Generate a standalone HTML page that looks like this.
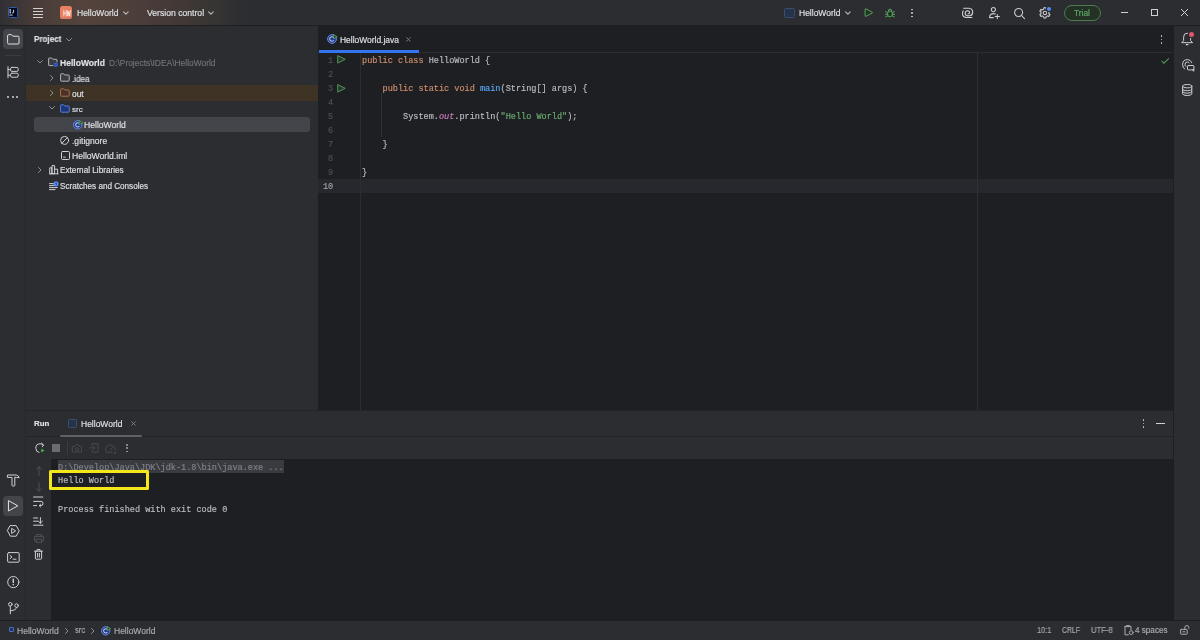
<!DOCTYPE html>
<html><head><meta charset="utf-8">
<style>
*{margin:0;padding:0;box-sizing:border-box}
html,body{width:1200px;height:640px;overflow:hidden;background:#2B2D30;font-family:"Liberation Sans",sans-serif;color:#DFE1E5}
.a{position:absolute}
.t{position:absolute;white-space:pre;will-change:transform;-webkit-text-stroke:0.15px currentColor;line-height:12px;height:12px;font-size:8.2px}
.m{font-family:"Liberation Mono",monospace}
svg{position:absolute;overflow:visible}
.ic{fill:none;stroke:#CED0D6;stroke-width:1;stroke-linecap:round;stroke-linejoin:round}
</style></head><body>
<!-- TITLE BAR -->
<div class="a" id="title" style="left:0;top:0;width:1200px;height:25px;background:#2B2D30"></div>
<div class="a" style="left:0;top:0;width:520px;height:25px;background:linear-gradient(90deg,#2F2F33 0px,#3A3536 14px,#4A3D39 38px,#53433C 80px,#50413B 110px,#4B3D3A 140px,#3F3835 188px,#373434 215px,#2E2E31 238px,#2B2D30 260px)"></div>

<!-- IDE logo -->
<div class="a" style="left:7.5px;top:7px;width:10.5px;height:10.5px;background:#060A20;border:1px solid #2C5C9E;border-radius:1.5px"></div>
<svg style="left:9px;top:8.5px" width="7" height="8"><g fill="none" stroke="#E6E6EE" stroke-width="0.9"><path d="M1.2 0.8 L1.2 3.8 M0.4 0.8 L2 0.8 M0.4 3.8 L2 3.8 M4.6 0.8 L4.6 3 Q4.6 3.9 3.7 3.9 L3 3.9"/></g><rect x="0.4" y="5.6" width="3.2" height="0.9" fill="#E6E6EE"/></svg>
<!-- hamburger -->
<div class="a" style="left:32.5px;top:8px;width:10.5px;height:1px;background:#D6CFCB"></div>
<div class="a" style="left:32.5px;top:11px;width:10.5px;height:1px;background:#D6CFCB"></div>
<div class="a" style="left:32.5px;top:14px;width:10.5px;height:1px;background:#D6CFCB"></div>
<div class="a" style="left:32.5px;top:17px;width:10.5px;height:1px;background:#D6CFCB"></div>
<!-- HW badge -->
<div class="a" style="left:59.9px;top:6.3px;width:12.5px;height:12.7px;background:linear-gradient(135deg,#EC8568,#DD7558);border-radius:2.6px"></div>
<svg style="left:62.5px;top:9.5px" width="8" height="7"><g fill="none" stroke="#FFF0E8" stroke-width="0.85"><path d="M0.8 0.2 L0.8 6.3 M3.2 0.2 L3.2 6.3 M0.8 3.1 L3.2 3.1"/><path d="M4.1 0.2 L4.9 6.2 L5.8 1.2 L6.7 6.2 L7.5 0.2"/></g></svg>
<div class="t" id="tb1" style="left:76.5px;top:7px;font-size:8.5px;color:#DFE1E5">HelloWorld</div>
<svg style="left:123px;top:10.6px" width="6" height="4"><path class="ic" d="M0.6 0.8 L2.9 3.1 L5.2 0.8" style="stroke:#BDB7B4;stroke-width:1.15"/></svg>
<div class="t" id="tb2" style="left:147px;top:7px;font-size:8.63px;color:#DFE1E5">Version control</div>
<svg style="left:207.7px;top:10.6px" width="6" height="4"><path class="ic" d="M0.6 0.8 L2.9 3.1 L5.2 0.8" style="stroke:#B8B6B6;stroke-width:1.15"/></svg>

<!-- run config -->
<div class="a" style="left:784px;top:8px;width:11px;height:10px;background:#263248;border:1px solid #3A4E72;border-radius:1.5px"></div>
<div class="t" id="tb3" style="left:798.75px;top:7px;font-size:8.5px;color:#DFE1E5">HelloWorld</div>
<svg style="left:844.5px;top:10.6px" width="6" height="4"><path class="ic" d="M0.6 0.8 L2.9 3.1 L5.2 0.8" style="stroke:#B6B8BE;stroke-width:1.15"/></svg>
<svg style="left:864px;top:8px" width="10" height="10"><path d="M1.1 1.3 Q1.1 0.5 1.9 0.9 L8.3 4.2 Q8.9 4.6 8.3 5 L1.9 8.3 Q1.1 8.7 1.1 7.9 Z" fill="#1F3324" stroke="#58A45E" stroke-width="1" stroke-linejoin="round"/></svg>
<svg style="left:885px;top:8px" width="10" height="10"><g fill="none" stroke="#58A45E" stroke-width="1" stroke-linecap="round"><ellipse cx="5" cy="5.9" rx="2.5" ry="3" fill="#1F3324"/><path d="M3.3 3.2 Q3.3 1 5 1 Q6.7 1 6.7 3.2"/><path d="M0.6 3.6 L2.4 4.6 M0.4 6.3 L2.4 6.3 M0.7 8.9 L2.6 7.9 M9.4 3.6 L7.6 4.6 M9.6 6.3 L7.6 6.3 M9.3 8.9 L7.4 7.9"/></g></svg>
<div class="a" style="left:911px;top:8.5px;width:1.6px;height:1.6px;background:#CED0D6;border-radius:1px"></div>
<div class="a" style="left:911px;top:12px;width:1.6px;height:1.6px;background:#CED0D6;border-radius:1px"></div>
<div class="a" style="left:911px;top:15.5px;width:1.6px;height:1.6px;background:#CED0D6;border-radius:1px"></div>
<!-- AI swirl -->
<svg style="left:961px;top:7px" width="13" height="12"><path class="ic" d="M2.6 1.2 L7.8 1.2 Q11.7 1.4 11.7 5.4 Q11.5 8.5 8.9 8.8 L6.7 8.9 Q4.2 8.7 4.2 6.3 Q4.4 3.9 6.6 3.8 Q8.7 3.9 8.7 5.9 Q8.5 6.9 7.1 6.9 M10.9 10.5 L5 10.4 Q1.5 10.2 1.5 6.6 Q1.5 5 2.2 3.9" style="stroke:#CED0D6;stroke-width:1.1"/></svg>
<!-- add user -->
<svg style="left:989px;top:7px" width="12" height="12"><g class="ic" style="stroke-width:1.05"><circle cx="4.4" cy="2.6" r="2.1"/><path d="M0.6 10.6 Q0.6 6.6 4.6 6.6 Q5.6 6.6 6.4 6.9 M0.6 10.6 L4.3 10.6"/><path d="M8.3 7.4 L8.3 11.6 M6.2 9.5 L10.4 9.5"/></g></svg>
<!-- search -->
<svg style="left:1014px;top:7.5px" width="12" height="12"><g class="ic" style="stroke-width:1.05"><circle cx="4.6" cy="4.5" r="4"/><path d="M7.5 7.5 L10.5 10.6"/></g></svg>
<!-- settings -->
<svg style="left:1039px;top:7px" width="12" height="12"><g class="ic" style="stroke-width:1.05"><path d="M3.90 2.44 L4.73 2.07 L4.80 0.72 L7.00 0.72 L7.07 2.07 L7.90 2.44 L8.63 2.97 L9.84 2.35 L10.94 4.26 L9.80 5.00 L9.90 5.90 L9.80 6.80 L10.94 7.54 L9.84 9.45 L8.63 8.83 L7.90 9.36 L7.07 9.73 L7.00 11.08 L4.80 11.08 L4.73 9.73 L3.90 9.36 L3.17 8.83 L1.96 9.45 L0.86 7.54 L2.00 6.80 L1.90 5.90 L2.00 5.00 L0.86 4.26 L1.96 2.35 L3.17 2.97 Z"/><circle cx="5.9" cy="5.9" r="1.7"/></g></svg>
<div class="a" style="left:1046.6px;top:6.5px;width:4.4px;height:4.4px;background:#548AF7;border-radius:50%;box-shadow:0 0 0 1.1px #2B2D30"></div>
<!-- Trial -->
<div class="a" style="left:1064px;top:4.5px;width:37px;height:16px;background:#233224;border:1.1px solid #4C7D50;border-radius:8px"></div>
<div class="t" id="trial" style="left:1074.4px;top:7.2px;font-size:8.4px;color:#62A866">Trial</div>
<!-- window controls -->
<div class="a" style="left:1121px;top:12px;width:7px;height:1px;background:#CED0D6"></div>
<div class="a" style="left:1151px;top:9px;width:7px;height:7px;border:1px solid #CED0D6"></div>
<svg style="left:1181px;top:9px" width="7" height="7"><path d="M0 0 L7 7 M7 0 L0 7" stroke="#CED0D6" stroke-width="1"/></svg>
<div class="a" style="left:0;top:25px;width:1200px;height:1px;background:#1E1F22"></div>

<!-- LEFT STRIP -->
<div class="a" style="left:25px;top:26px;width:1.4px;height:594px;background:#27282B"></div>


<!-- left strip icons -->
<div class="a" style="left:3px;top:29px;width:19.5px;height:19.5px;background:#43454A;border-radius:4px"></div>
<svg style="left:6.5px;top:33.5px" width="13" height="11"><path class="ic" d="M0.6 1.6 Q0.6 0.6 1.6 0.6 L4.4 0.6 L5.8 2.2 L11 2.2 Q12 2.2 12 3.2 L12 9 Q12 10 11 10 L1.6 10 Q0.6 10 0.6 9 Z" style="stroke:#DFE1E5"/></svg>
<div class="a" style="left:5px;top:55px;width:15.5px;height:1px;background:#393B40"></div>
<svg style="left:6.5px;top:65.5px" width="12" height="13"><g class="ic"><path d="M1 0.6 L1 11.8 M1 3.6 L3.2 3.6 M1 9.2 L3.2 9.2"/><rect x="3.6" y="1.4" width="7.6" height="4" rx="1.3"/><rect x="3.6" y="7.2" width="7.6" height="4" rx="1.3"/></g></svg>
<div class="a" style="left:7.1px;top:96.3px;width:2.1px;height:2.1px;background:#CED0D6;border-radius:50%"></div>
<div class="a" style="left:11.6px;top:96.3px;width:2.1px;height:2.1px;background:#CED0D6;border-radius:50%"></div>
<div class="a" style="left:16.1px;top:96.3px;width:2.1px;height:2.1px;background:#CED0D6;border-radius:50%"></div>
<!-- bottom left strip -->
<svg style="left:6.5px;top:473.5px" width="13" height="13"><g class="ic"><path d="M0.8 1 L9.2 1 Q11.6 1.6 12.2 3.6 L9.6 3.6 L7.8 3 L7.8 11.4 Q7.8 12 7.2 12 L5.6 12 Q5 12 5 11.4 L5 3.4 L0.8 3.4 Z"/></g></svg>
<div class="a" style="left:3px;top:496px;width:19.5px;height:19.5px;background:#43454A;border-radius:4px"></div>
<svg style="left:8px;top:499.5px" width="11" height="12"><path class="ic" d="M0.8 0.8 L9.8 5.8 L0.8 10.8 Z" style="stroke:#DFE1E5"/></svg>
<svg style="left:6.5px;top:525px" width="13" height="12"><g class="ic"><path d="M3.4 0.6 L9.2 0.6 L12.2 5.9 L9.2 11.2 L3.4 11.2 L0.5 5.9 Z"/><path d="M5 3.6 L8.6 5.9 L5 8.2 Z"/></g></svg>
<svg style="left:6.5px;top:551.5px" width="13" height="11"><g class="ic"><rect x="0.6" y="0.6" width="11.6" height="9.6" rx="1.2"/><path d="M3 3.4 L5 5 L3 6.6 M6 7.2 L9 7.2"/></g></svg>
<svg style="left:6.5px;top:576px" width="13" height="13"><g class="ic"><circle cx="6.3" cy="6.1" r="5.6"/><path d="M6.3 3.2 L6.3 6.4" stroke-width="1.4"/></g><circle cx="6.3" cy="8.6" r="0.8" fill="#CED0D6"/></svg>
<svg style="left:7.5px;top:601.5px" width="12" height="13"><g class="ic"><circle cx="2.3" cy="2.3" r="1.8"/><circle cx="8.6" cy="3.6" r="1.8"/><path d="M2.3 4.1 L2.3 11.8 M8.6 5.4 Q8.6 8.3 2.3 8.8"/></g></svg>
<!-- right strip icons -->
<svg style="left:1181px;top:32px" width="13" height="14"><g class="ic"><path d="M1 10.4 L2.6 8.6 L2.6 5.2 Q2.6 1.2 6.1 1.2 Q9.6 1.2 9.6 5.2 L9.6 8.6 L11.3 10.4 Z"/><path d="M5.2 12.6 L7 12.6" stroke-width="1.2"/></g></svg>
<div class="a" style="left:1188.9px;top:32.3px;width:5.2px;height:5.2px;background:#E0566A;border-radius:50%;box-shadow:0 0 0 1.2px #2B2D30"></div>
<svg style="left:1181.5px;top:59px" width="13" height="13"><g class="ic"><path d="M9.8 3.6 Q8.4 0.6 5.6 0.6 Q0.6 0.6 0.6 5.6 Q0.6 8.4 2.6 10"/><path d="M7.2 4 Q6.6 3 5.4 3 Q3 3 3 5.6 Q3 6.8 4 7.6"/><rect x="5.5" y="6.5" width="6.4" height="4.4" rx="0.8"/><path d="M10.4 10.9 L11.8 12.2 L11.8 10.6"/></g></svg>
<svg style="left:1181.5px;top:84px" width="11" height="12"><g class="ic"><ellipse cx="5.2" cy="2.2" rx="4.6" ry="1.7"/><path d="M0.6 2.2 L0.6 9.8 Q0.6 11.5 5.2 11.5 Q9.8 11.5 9.8 9.8 L9.8 2.2 M0.6 5 Q0.6 6.7 5.2 6.7 Q9.8 6.7 9.8 5 M0.6 7.6 Q0.6 9.2 5.2 9.2 Q9.8 9.2 9.8 7.6"/></g></svg>
<!-- PROJECT PANEL -->
<div class="a" style="left:26px;top:26px;width:292px;height:384px;background:#2B2D30"></div>


<div class="t" style="left:34.25px;top:33.3px;font-size:8.6px;font-weight:bold;color:#DFE1E5;transform:scaleX(0.94);transform-origin:0 0">Project</div>
<svg style="left:66px;top:38px" width="6" height="4"><path class="ic" d="M0.5 0.5 L3 3 L5.5 0.5" style="stroke:#8C8F96"/></svg>
<!-- out row highlight -->
<div class="a" style="left:26px;top:85.3px;width:292px;height:15.5px;background:#3E3325"></div>
<!-- selected row -->
<div class="a" style="left:34px;top:116.95px;width:276px;height:15px;background:#43454A;border-radius:3px"></div>
<!-- chevrons -->
<svg style="left:36.5px;top:59.75px" width="6" height="4"><path class="ic" d="M0.5 0.5 L3 3 L5.5 0.5" style="stroke:#8C8F96"/></svg>
<svg style="left:49.5px;top:74.7px" width="4" height="6"><path class="ic" d="M0.5 0.5 L3 3 L0.5 5.5" style="stroke:#8C8F96"/></svg>
<svg style="left:49.5px;top:90.15px" width="4" height="6"><path class="ic" d="M0.5 0.5 L3 3 L0.5 5.5" style="stroke:#8C8F96"/></svg>
<svg style="left:48.5px;top:106.1px" width="6" height="4"><path class="ic" d="M0.5 0.5 L3 3 L5.5 0.5" style="stroke:#8C8F96"/></svg>
<svg style="left:37.5px;top:167.4px" width="4" height="6"><path class="ic" d="M0.5 0.5 L3 3 L0.5 5.5" style="stroke:#8C8F96"/></svg>
<!-- icons -->
<svg style="left:48px;top:57.25px" width="10" height="10"><path d="M0.6 1.6 Q0.6 1 1.2 1 L3.6 1 L4.8 2.3 L8.4 2.3 Q9 2.3 9 2.9 L9 8 Q9 8.6 8.4 8.6 L1.2 8.6 Q0.6 8.6 0.6 8 Z" fill="#3A3C41" stroke="#B4B6BC" stroke-width="1" stroke-linejoin="round"/><rect x="5.6" y="5.6" width="4.2" height="4.2" rx="0.8" fill="#2A4AA8" stroke="#2B2D30" stroke-width="0.9"/><rect x="6.1" y="6.1" width="3.2" height="3.2" rx="0.6" fill="#2A4AA8" stroke="#4C7BE0" stroke-width="0.7"/></svg>
<svg style="left:60px;top:72.7px" width="10" height="9"><path d="M0.6 1.4 Q0.6 0.8 1.2 0.8 L3.6 0.8 L4.8 2 L8.6 2 Q9.2 2 9.2 2.6 L9.2 7.6 Q9.2 8.2 8.6 8.2 L1.2 8.2 Q0.6 8.2 0.6 7.6 Z" fill="#3A3C41" stroke="#B4B6BC" stroke-width="1" stroke-linejoin="round"/></svg>
<svg style="left:60px;top:88.15px" width="10" height="9"><path d="M0.6 1.4 Q0.6 0.8 1.2 0.8 L3.6 0.8 L4.8 2 L8.6 2 Q9.2 2 9.2 2.6 L9.2 7.6 Q9.2 8.2 8.6 8.2 L1.2 8.2 Q0.6 8.2 0.6 7.6 Z" fill="#4A3129" stroke="#A8714E" stroke-width="1" stroke-linejoin="round"/></svg>
<svg style="left:60px;top:103.6px" width="10" height="9"><path d="M0.6 1.4 Q0.6 0.8 1.2 0.8 L3.6 0.8 L4.8 2 L8.6 2 Q9.2 2 9.2 2.6 L9.2 7.6 Q9.2 8.2 8.6 8.2 L1.2 8.2 Q0.6 8.2 0.6 7.6 Z" fill="#1F3478" stroke="#5A7ED6" stroke-width="1" stroke-linejoin="round"/></svg>
<svg style="left:72.5px;top:119.55px" width="10" height="10"><circle cx="4.7" cy="4.8" r="4.2" fill="#22398A" stroke="#6D8DDB" stroke-width="0.95"/><path d="M6.4 3.5 A2.1 2.1 0 1 0 6.4 6.1" fill="none" stroke="#B5C6F2" stroke-width="1.05"/><path d="M6.2 0.6 L9.6 2.6 L6.2 4.6 Z" fill="#1E3D27" stroke="#5EAE66" stroke-width="0.8" stroke-linejoin="round"/></svg>
<svg style="left:60px;top:135.5px" width="10" height="10"><g class="ic" style="stroke:#CED0D6"><circle cx="4.6" cy="4.4" r="4"/><path d="M1.8 7.2 L7.4 1.6"/></g></svg>
<svg style="left:60.5px;top:150.95px" width="9" height="9"><g class="ic" style="stroke:#CED0D6"><rect x="0.5" y="0.5" width="8" height="8" rx="1"/><path d="M2.6 6.2 L4.2 6.2"/></g></svg>
<svg style="left:48.5px;top:165.4px" width="10" height="10"><g class="ic" style="stroke:#CED0D6"><path d="M0.5 8.8 L9 8.8 M0.7 3.2 L0.7 8.8 L2.8 8.8 L2.8 3.2 Z M3 1 L3 8.8 L5.6 8.8 L5.6 1 Z M5.6 4.2 L8.6 4.2 L8.6 8.8"/></g></svg>
<svg style="left:48.5px;top:180.85px" width="10" height="10"><g class="ic" style="stroke:#CED0D6"><path d="M0.5 2.6 L4.6 2.6 M0.5 4.6 L5 4.6 M0.5 6.6 L8.4 6.6 M0.5 8.6 L6 8.6"/></g><circle cx="7" cy="2.8" r="2.6" fill="#548AF7"/><path d="M7 1.6 L7 2.9 L8 3.5" stroke="#1E1F22" stroke-width="0.7" fill="none"/></svg>
<!-- texts -->
<div class="t" style="left:60px;top:57.25px;font-size:8.55px;font-weight:bold;color:#DFE1E5">HelloWorld</div>
<div class="t" style="left:109.2px;top:57.25px;font-size:8.43px;color:#6F737A">D:\Projects\IDEA\HelloWorld</div>
<div class="t" style="left:71.7px;top:72.5px;font-size:8.5px;transform:scaleX(0.95);transform-origin:0 0">.idea</div>
<div class="t" style="left:71.7px;top:88.15px;font-size:8.4px">out</div>
<div class="t" style="left:71.9px;top:103.6px;font-size:8.1px">src</div>
<div class="t" style="left:84.2px;top:119.05px;font-size:8.6px">HelloWorld</div>
<div class="t" style="left:71.9px;top:134.5px;font-size:8.55px">.gitignore</div>
<div class="t" style="left:71.9px;top:149.95px;font-size:8.6px">HelloWorld.iml</div>
<div class="t" style="left:59.7px;top:165.4px;font-size:8.2px">External Libraries</div>
<div class="t" style="left:59.7px;top:180.85px;font-size:8.15px">Scratches and Consoles</div>

<!-- EDITOR -->
<div class="a" style="left:318px;top:26px;width:856px;height:384px;background:#1E1F22"></div>
<div class="a" style="left:318px;top:52px;width:856px;height:1px;background:#2B2D30"></div>


<!-- tab -->
<svg style="left:326.75px;top:33.9px" width="11" height="11"><circle cx="5" cy="5" r="4.4" fill="#22398A" stroke="#6D8DDB" stroke-width="0.95"/><path d="M6.8 3.6 A2.3 2.3 0 1 0 6.8 6.4" fill="none" stroke="#B5C6F2" stroke-width="1.05"/><path d="M6.6 0.6 L10.2 2.7 L6.6 4.8 Z" fill="#1E3D27" stroke="#5EAE66" stroke-width="0.8" stroke-linejoin="round"/></svg>
<div class="t" style="left:340px;top:34px;font-size:8.45px;color:#DFE1E5">HelloWorld.java</div>
<svg style="left:406.3px;top:37.2px" width="5" height="5"><path d="M0.3 0.3 L4.6 4.6 M4.6 0.3 L0.3 4.6" stroke="#7D8087" stroke-width="0.9"/></svg>
<div class="a" style="left:319px;top:49.7px;width:100px;height:3px;background:#3574F0"></div>
<!-- tab row kebab -->
<div class="a" style="left:1160.5px;top:35px;width:1.5px;height:1.5px;background:#CED0D6;border-radius:1px"></div>
<div class="a" style="left:1160.5px;top:38.5px;width:1.5px;height:1.5px;background:#CED0D6;border-radius:1px"></div>
<div class="a" style="left:1160.5px;top:42px;width:1.5px;height:1.5px;background:#CED0D6;border-radius:1px"></div>
<!-- check -->
<svg style="left:1161px;top:58px" width="9" height="6"><path d="M0.7 3 L2.9 5.2 L7.6 0.6" fill="none" stroke="#4F9A57" stroke-width="1.05" stroke-linecap="round"/></svg>
<!-- current line -->
<div class="a" style="left:318px;top:179.2px;width:855px;height:14.3px;background:#26282E"></div>
<!-- gutter line, right margin, indent guide -->
<div class="a" style="left:360px;top:53px;width:1px;height:357px;background:#2B2D30"></div>
<div class="a" style="left:977px;top:53px;width:1px;height:357px;background:#2E3034"></div>
<div class="a" style="left:381px;top:92.7px;width:1px;height:44.5px;background:#2F3136"></div>
<div class="t m" style="left:300px;width:33.2px;text-align:right;top:53.6px;height:14px;line-height:14px;font-size:8.55px;color:#4B5059">1</div>
<div class="t m" style="left:300px;width:33.2px;text-align:right;top:67.65px;height:14px;line-height:14px;font-size:8.55px;color:#4B5059">2</div>
<div class="t m" style="left:300px;width:33.2px;text-align:right;top:81.7px;height:14px;line-height:14px;font-size:8.55px;color:#4B5059">3</div>
<div class="t m" style="left:300px;width:33.2px;text-align:right;top:95.75px;height:14px;line-height:14px;font-size:8.55px;color:#4B5059">4</div>
<div class="t m" style="left:300px;width:33.2px;text-align:right;top:109.8px;height:14px;line-height:14px;font-size:8.55px;color:#4B5059">5</div>
<div class="t m" style="left:300px;width:33.2px;text-align:right;top:123.85px;height:14px;line-height:14px;font-size:8.55px;color:#4B5059">6</div>
<div class="t m" style="left:300px;width:33.2px;text-align:right;top:137.9px;height:14px;line-height:14px;font-size:8.55px;color:#4B5059">7</div>
<div class="t m" style="left:300px;width:33.2px;text-align:right;top:151.95px;height:14px;line-height:14px;font-size:8.55px;color:#4B5059">8</div>
<div class="t m" style="left:300px;width:33.2px;text-align:right;top:166.0px;height:14px;line-height:14px;font-size:8.55px;color:#4B5059">9</div>
<div class="t m" style="left:300px;width:33.2px;text-align:right;top:180.05px;height:14px;line-height:14px;font-size:8.55px;color:#A1A3AB">10</div>
<div class="t m" style="left:362px;top:53.6px;height:14px;line-height:14px;font-size:8.55px;color:#BCBEC4"><span style="color:#CF8E6D">public class </span>HelloWorld {</div>
<div class="t m" style="left:362px;top:81.7px;height:14px;line-height:14px;font-size:8.55px;color:#BCBEC4">    <span style="color:#CF8E6D">public static void </span><span style="color:#56A8F5">main</span>(String[] args) {</div>
<div class="t m" style="left:362px;top:109.8px;height:14px;line-height:14px;font-size:8.55px;color:#BCBEC4">        System.<span style="color:#C77DBB;font-style:italic">out</span>.println(<span style="color:#6AAB73">"Hello World"</span>);</div>
<div class="t m" style="left:362px;top:137.9px;height:14px;line-height:14px;font-size:8.55px;color:#BCBEC4">    }</div>
<div class="t m" style="left:362px;top:166.0px;height:14px;line-height:14px;font-size:8.55px;color:#BCBEC4">}</div>
<svg style="left:336.9px;top:55.4px" width="9" height="9"><path d="M0.7 0.6 L8.2 4.3 L0.7 8.1 Z" fill="#263A2B" stroke="#559A5B" stroke-width="0.95" stroke-linejoin="round"/></svg>
<svg style="left:336.9px;top:83.5px" width="9" height="9"><path d="M0.7 0.6 L8.2 4.3 L0.7 8.1 Z" fill="#263A2B" stroke="#559A5B" stroke-width="0.95" stroke-linejoin="round"/></svg>

<!-- RIGHT STRIP -->
<div class="a" style="left:1173px;top:26px;width:1px;height:594px;background:#1E1F22"></div>

<!-- RUN PANEL -->
<div class="a" style="left:26px;top:410px;width:1147px;height:1px;background:#232428"></div>
<div class="a" style="left:26px;top:436px;width:1147px;height:1px;background:#232428"></div>
<div class="a" style="left:51px;top:459px;width:1122px;height:161px;background:#1E1F22"></div>


<!-- run header -->
<div class="t" style="left:34.2px;top:417.6px;font-size:7.9px;font-weight:bold;color:#DFE1E5">Run</div>
<div class="a" style="left:68px;top:418.8px;width:9px;height:9px;background:#263248;border:1px solid #3A4E72;border-radius:1.2px"></div>
<div class="t" style="left:80.7px;top:417.5px;font-size:8.5px;color:#DFE1E5">HelloWorld</div>
<svg style="left:130.5px;top:421px" width="5" height="5"><path d="M0.3 0.3 L4.6 4.6 M4.6 0.3 L0.3 4.6" stroke="#7D8087" stroke-width="0.9"/></svg>
<div class="a" style="left:60px;top:435px;width:82px;height:2px;background:#5E6166;border-radius:1px"></div>
<div class="a" style="left:1142.6px;top:419.4px;width:1.6px;height:1.6px;background:#CED0D6;border-radius:1px"></div>
<div class="a" style="left:1142.6px;top:422.8px;width:1.6px;height:1.6px;background:#CED0D6;border-radius:1px"></div>
<div class="a" style="left:1142.6px;top:426.2px;width:1.6px;height:1.6px;background:#CED0D6;border-radius:1px"></div>
<div class="a" style="left:1156px;top:423px;width:8.5px;height:1px;background:#CED0D6"></div>
<!-- run toolbar -->
<svg style="left:34.5px;top:442.5px" width="11" height="11"><g class="ic"><path d="M8.2 2 Q7 0.8 5.2 0.8 Q0.8 0.8 0.8 5.2 Q0.8 9 4.2 9.6"/><path d="M6.6 0.3 L8.6 1.9 L7.2 4"/></g><circle cx="7.5" cy="7.6" r="3.3" fill="#2B2D30"/><circle cx="7.5" cy="7.6" r="2.9" fill="#253A2A"/><path d="M6.4 5.9 L9.4 7.6 L6.4 9.3 Z" fill="#5FB865"/></svg>
<div class="a" style="left:52px;top:444.1px;width:8px;height:7.6px;background:#6A6C71;border-radius:0.8px"></div>
<div class="a" style="left:66.5px;top:441px;width:1px;height:14px;background:#393B40"></div>
<svg style="left:72px;top:444px" width="11" height="9"><g class="ic" style="stroke:#46494E"><path d="M0.6 2.6 L2.6 2.6 L3.6 0.8 L6.6 0.8 L7.6 2.6 L9.6 2.6 L9.6 8 L0.6 8 Z"/><circle cx="5.1" cy="5.2" r="1.5"/></g></svg>
<svg style="left:89px;top:443px" width="10" height="10"><g class="ic" style="stroke:#46494E"><path d="M3.2 2.6 L3.2 0.6 L9 0.6 L9 9.2 L3.2 9.2 L3.2 7.2 M0.6 4.9 L6 4.9 M4.4 3.3 L6 4.9 L4.4 6.5"/></g></svg>
<svg style="left:105px;top:444.3px" width="12" height="10"><g class="ic" style="stroke:#46494E"><path d="M1 8 Q0.6 7.1 0.6 6 Q0.6 1 5.4 1 Q10.2 1 10.2 6 M5.3 6.1 L7.4 3.6 M1.4 8.2 L7 8.2"/><circle cx="10" cy="8.8" r="0.7"/></g></svg>
<div class="a" style="left:126.2px;top:444px;width:1.6px;height:1.6px;background:#A0A3A9;border-radius:1px"></div>
<div class="a" style="left:126.2px;top:447.3px;width:1.6px;height:1.6px;background:#A0A3A9;border-radius:1px"></div>
<div class="a" style="left:126.2px;top:450.6px;width:1.6px;height:1.6px;background:#A0A3A9;border-radius:1px"></div>
<!-- console left toolbar -->
<svg style="left:35.5px;top:466px" width="6" height="10"><g class="ic" style="stroke:#4E5157"><path d="M3 9.4 L3 0.8 M0.6 3.2 L3 0.8 L5.4 3.2"/></g></svg>
<svg style="left:35.5px;top:482px" width="6" height="10"><g class="ic" style="stroke:#4E5157"><path d="M3 0.6 L3 9.2 M0.6 6.8 L3 9.2 L5.4 6.8"/></g></svg>
<svg style="left:33px;top:496px" width="11" height="12"><g class="ic"><path d="M0.6 1 L9.8 1 M0.6 5.4 L8 5.4 Q10 5.4 10 7.5 Q10 9.6 8 9.6 L6.4 9.6 M0.6 9.6 L3.6 9.6"/><path d="M7.6 8.2 L6.2 9.6 L7.6 11"/></g></svg>
<svg style="left:33px;top:516.5px" width="11" height="9"><g class="ic"><path d="M0.6 1 L4.6 1 M0.6 4.2 L4.6 4.2 M0.6 8.2 L10 8.2 M7.4 0.6 L7.4 6.2 M5.4 4.2 L7.4 6.2 L9.4 4.2"/></g></svg>
<svg style="left:33.5px;top:533.5px" width="10" height="9"><g class="ic" style="stroke:#4E5157"><path d="M2.4 2.4 L2.4 0.6 L7.6 0.6 L7.6 2.4 M2.2 7 L0.6 7 L0.6 2.4 L9.4 2.4 L9.4 7 L7.8 7 M2.4 5.2 L7.6 5.2 L7.6 8.4 L2.4 8.4 Z"/></g></svg>
<svg style="left:34px;top:549px" width="9" height="11"><g class="ic"><path d="M0.6 2.2 L8.4 2.2 M3 2.2 L3 0.6 L6 0.6 L6 2.2 M1.4 2.2 L1.4 9.4 Q1.4 10.2 2.2 10.2 L6.8 10.2 Q7.6 10.2 7.6 9.4 L7.6 2.2 M3.6 4.4 L3.6 8 M5.4 4.4 L5.4 8"/></g></svg>
<!-- console content -->
<div class="a" style="left:57.8px;top:459.6px;width:226px;height:13.3px;background:#393B40"></div>
<div class="t m" style="left:58.2px;top:462px;height:12px;line-height:12px;font-size:8.55px;color:#80838A">D:\Develop\Java\JDK\jdk-1.8\bin\java.exe ...</div>
<div class="a" style="left:48.7px;top:469.6px;width:100.4px;height:20.2px;border:3.7px solid #F5E81A;border-radius:1.5px"></div>
<div class="t m" style="left:58.2px;top:475.3px;height:12px;line-height:12px;font-size:8.55px;color:#BCBEC4">Hello World</div>
<div class="t m" style="left:58.2px;top:503.5px;height:12px;line-height:12px;font-size:8.55px;color:#BCBEC4">Process finished with exit code 0</div>

<!-- STATUS BAR -->
<div class="a" style="left:0;top:620px;width:1200px;height:1px;background:#1E1F22"></div>


<div class="a" style="left:8.8px;top:627.3px;width:5.2px;height:5.2px;background:#22315A;border:1.1px solid #4A6FD0;border-radius:1px"></div>
<div class="t" style="left:16.7px;top:624.5px;font-size:8.55px;color:#A9ACB2">HelloWorld</div>
<svg style="left:64.5px;top:627.5px" width="4" height="6"><path class="ic" d="M0.5 0.5 L3 3 L0.5 5.5" style="stroke:#8C8F96"/></svg>
<div class="t" style="left:74.8px;top:623.6px;font-size:9.2px;color:#A9ACB2;transform:scaleX(0.83);transform-origin:0 0">src</div>
<svg style="left:91px;top:627.5px" width="4" height="6"><path class="ic" d="M0.5 0.5 L3 3 L0.5 5.5" style="stroke:#8C8F96"/></svg>
<svg style="left:101.3px;top:625.5px" width="10" height="10"><circle cx="4.7" cy="4.8" r="4.2" fill="#22398A" stroke="#6D8DDB" stroke-width="0.95"/><path d="M6.4 3.5 A2.1 2.1 0 1 0 6.4 6.1" fill="none" stroke="#B5C6F2" stroke-width="1.05"/><path d="M6.2 0.6 L9.6 2.6 L6.2 4.6 Z" fill="#1E3D27" stroke="#5EAE66" stroke-width="0.8" stroke-linejoin="round"/></svg>
<div class="t" style="left:113.7px;top:624.5px;font-size:8.5px;color:#A9ACB2">HelloWorld</div>
<div class="t" style="left:1037px;top:624.5px;font-size:8.2px;color:#A9ACB2;transform:scaleX(0.89);transform-origin:0 0">10:1</div>
<div class="t" style="left:1062.3px;top:624.5px;font-size:8.2px;color:#A9ACB2;transform:scaleX(0.84);transform-origin:0 0">CRLF</div>
<div class="t" style="left:1090.6px;top:624.5px;font-size:8.2px;color:#A9ACB2;transform:scaleX(0.93);transform-origin:0 0">UTF-8</div>
<svg style="left:1123.8px;top:625px" width="10" height="11"><g class="ic" style="stroke:#A9ACB2"><path d="M2.2 1.6 L2.2 0.6 L5.6 0.6 L5.6 1.6 M1 1.6 L7 1.6 L7 4.6 M1 1.6 L1 9.8 L4.4 9.8"/><circle cx="7.2" cy="7.6" r="1.9"/></g></svg>
<div class="t" style="left:1135.1px;top:624.5px;font-size:8.15px;color:#A9ACB2">4 spaces</div>
<svg style="left:1180px;top:625px" width="10" height="10"><g class="ic" style="stroke:#A9ACB2"><rect x="0.6" y="4.4" width="6.6" height="4.8" rx="0.6"/><path d="M4.8 4.4 L4.8 2.6 Q4.8 0.6 6.8 0.6 Q8.8 0.6 8.8 2.6 L8.8 3.4 M2.8 6.8 L4.8 6.8"/></g></svg>

</body></html>
